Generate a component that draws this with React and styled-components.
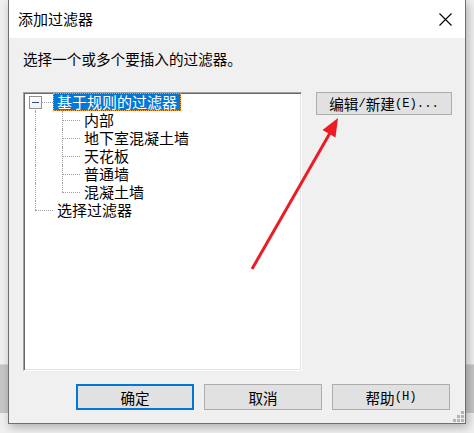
import React from 'react';
import styled, { createGlobalStyle } from 'styled-components';

const Global = createGlobalStyle`
  html, body { margin: 0; padding: 0; }
  body {
    width: 474px;
    height: 433px;
    overflow: hidden;
    font-family: "Noto Sans CJK SC", "Microsoft YaHei", sans-serif;
    background: linear-gradient(to bottom, #f0f0f0 0, #f0f0f0 364px, #d6d6d6 364px, #d6d6d6 365px, #c6c6c6 365px, #c6c6c6 413px, #efefef 413px);
    position: relative;
  }
`;

const Dialog = styled.div`
  position: relative;
  margin-left: 8px;
  width: 458px;
  height: 424px;
  box-sizing: border-box;
  border: 1px solid #6f6f6f;
  border-top: none;
  background: #f0f0f0;
  display: flex;
  flex-direction: column;
  box-shadow: 2px 3px 9px rgba(0, 0, 0, 0.28);
`;

const TitleBar = styled.div`
  height: 38px;
  flex: none;
  background: #fff;
  display: flex;
  align-items: center;
  justify-content: space-between;
  padding-left: 9px;
`;

const Title = styled.div`
  font-size: 15px;
  color: #000;
  line-height: 20px;
`;

const CloseButton = styled.div`
  width: 40px;
  height: 38px;
  display: flex;
  align-items: center;
  justify-content: center;
`;

const Body = styled.div`
  flex: 1;
  display: flex;
  flex-direction: column;
  padding: 12px 12px 13px 14px;
  box-sizing: border-box;
`;

const Prompt = styled.div`
  height: 18px;
  line-height: 18px;
  font-size: 14.6px;
  color: #000;
`;

const MainRow = styled.div`
  margin-top: 24px;
  display: flex;
  align-items: flex-start;
  gap: 14px;
`;

const TreeBox = styled.div`
  width: 279px;
  height: 279px;
  box-sizing: border-box;
  background: #fff;
  border: 1px solid;
  border-color: #a0a0a0 #ffffff #ffffff #a0a0a0;
  box-shadow: inset 1px 1px 0 #696969, inset -1px -1px 0 #e3e3e3;
  display: flex;
  flex-direction: column;
`;

const Row = styled.div`
  position: relative;
  height: 18px;
  display: flex;
  align-items: center;
  padding-left: ${p => 29 + p.$depth * 27}px;
`;

const VGuide = styled.span`
  position: absolute;
  left: ${p => 11 + p.$level * 27}px;
  top: ${p => p.$top}px;
  height: ${p => p.$h}px;
  border-left: 1px dotted #a0a0a0;
`;

const HGuide = styled.span`
  position: absolute;
  left: ${p => 11 + p.$level * 27}px;
  top: 9px;
  width: 18px;
  border-top: 1px dotted #a0a0a0;
`;

const Expander = styled.span`
  position: absolute;
  left: ${p => 5 + p.$level * 27}px;
  top: 3px;
  width: 11px;
  height: 11px;
  border: 1px solid #919191;
  background: linear-gradient(to bottom, #ffffff, #f0f0f0);
  z-index: 1;
  &::after {
    content: '';
    position: absolute;
    left: 2px;
    top: 5px;
    width: 7px;
    height: 1px;
    background: #3b4a8c;
  }
`;

const NodeLabel = styled.span`
  height: 18px;
  line-height: 18px;
  padding: 0 4px;
  font-size: 15px;
  white-space: nowrap;
  color: ${p => (p.$selected ? '#fff' : '#000')};
  background: ${p => (p.$selected ? '#0078d7' : 'transparent')};
  outline: ${p => (p.$selected ? '1px dotted #ff9a3c' : 'none')};
  outline-offset: -1px;
`;

const Button = styled.div`
  box-sizing: border-box;
  width: ${p => p.$w}px;
  height: ${p => p.$h}px;
  background: #e1e1e1;
  border: ${p => (p.$default ? '2px solid #0078d7' : '1px solid #adadad')};
  display: flex;
  align-items: center;
  justify-content: center;
  font-size: 14.6px;
  color: #000;
  white-space: nowrap;
`;

const Half = styled.span`
  font-family: "Liberation Mono", "DejaVu Sans Mono", monospace;
  font-size: 12.2px;
  vertical-align: -1px;
`;

const ButtonRow = styled.div`
  margin-top: 13px;
  display: flex;
  justify-content: flex-end;
  gap: 10px;
  padding-right: 3px;
`;

const Grip = styled.svg`
  position: absolute;
  right: 1px;
  bottom: 1px;
`;

const Arrow = styled.svg`
  position: absolute;
  left: 0;
  top: 0;
  pointer-events: none;
`;

const rows = [
  { label: '基于规则的过滤器', depth: 0, expander: true, selected: true, first: true, last: false, anc: [] },
  { label: '内部', depth: 1, last: false, anc: [true] },
  { label: '地下室混凝土墙', depth: 1, last: false, anc: [true] },
  { label: '天花板', depth: 1, last: false, anc: [true] },
  { label: '普通墙', depth: 1, last: false, anc: [true] },
  { label: '混凝土墙', depth: 1, last: true, anc: [true] },
  { label: '选择过滤器', depth: 0, last: true, anc: [] },
];

function TreeRow({ r }) {
  const top = r.first && r.depth === 0 ? 9 : 0;
  const bottom = r.last ? 9 : 18;
  return (
    <Row $depth={r.depth}>
      {r.anc.map((on, i) => (on ? <VGuide key={i} $level={i} $top={0} $h={18} /> : null))}
      <VGuide $level={r.depth} $top={top} $h={bottom - top} />
      <HGuide $level={r.depth} />
      {r.expander && <Expander $level={r.depth} />}
      <NodeLabel $selected={r.selected}>{r.label}</NodeLabel>
    </Row>
  );
}

export default function App() {
  return (
    <>
      <Global />
      <Dialog>
        <TitleBar>
          <Title>添加过滤器</Title>
          <CloseButton>
            <svg width="13" height="13" viewBox="0 0 13 13">
              <path d="M0.5 0.5 L12.5 12.5 M12.5 0.5 L0.5 12.5" stroke="#000" strokeWidth="1.1" fill="none" />
            </svg>
          </CloseButton>
        </TitleBar>
        <Body>
          <Prompt>选择一个或多个要插入的过滤器。</Prompt>
          <MainRow>
            <TreeBox>
              {rows.map((r, i) => (
                <TreeRow key={i} r={r} />
              ))}
            </TreeBox>
            <Button $w={136} $h={23}>
              编辑<Half>/</Half>新建<Half>(E)...</Half>
            </Button>
          </MainRow>
          <ButtonRow>
            <Button $w={118} $h={26} $default>确定</Button>
            <Button $w={118} $h={26}>取消</Button>
            <Button $w={118} $h={26}>帮助<Half>(H)</Half></Button>
          </ButtonRow>
        </Body>
        <Grip width="11" height="11" viewBox="0 0 11 11">
          <g fill="#b4b4b4">
            <rect x="8" y="0" width="3" height="3" />
            <rect x="4" y="4" width="3" height="3" />
            <rect x="8" y="4" width="3" height="3" />
            <rect x="0" y="8" width="3" height="3" />
            <rect x="4" y="8" width="3" height="3" />
            <rect x="8" y="8" width="3" height="3" />
          </g>
        </Grip>
      </Dialog>
      <Arrow width="474" height="433" viewBox="0 0 474 433">
        <line x1="252" y1="269" x2="330" y2="133" stroke="#ec1c24" strokeWidth="3" />
        <polygon points="338,118 335.5,137.5 322.5,130" fill="#ec1c24" />
      </Arrow>
    </>
  );
}
